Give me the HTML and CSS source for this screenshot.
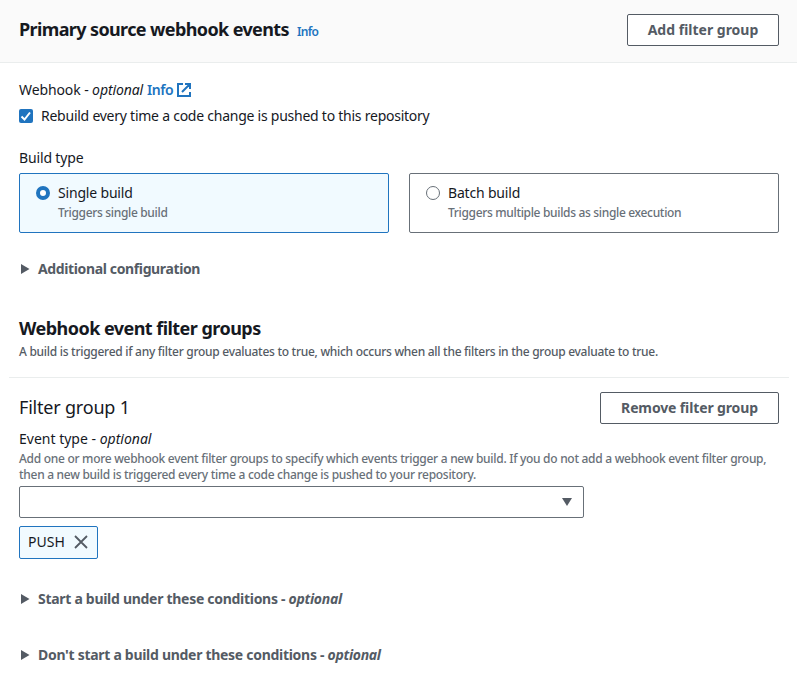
FILE: index.html
```html
<!DOCTYPE html>
<html lang="en">
<head>
<meta charset="utf-8">
<title>Primary source webhook events</title>
<link rel="stylesheet" href="styles.css">
</head>
<body>
<header class="panel-header">
  <h1>Primary source webhook events</h1>
  <a class="info-small">Info</a>
  <button class="btn add">Add filter group</button>
</header>
<main>
  <div class="row webhook"><span>Webhook - <i>optional</i></span><a>Info</a>
    <svg width="16" height="16" viewBox="0 0 16 16" fill="none" stroke="#2074bf" stroke-width="2"><path d="M14 10v4H2V2h5M9 2h5v5M6 10l8-8"/></svg>
  </div>
  <label class="row rebuild"><svg width="14" height="14" viewBox="0 0 14 14"><rect width="14" height="14" rx="2" fill="#2074bf"/><path d="M2.5 7.5l3 3 5.5-7" fill="none" stroke="#fff" stroke-width="2"/></svg><span>Rebuild every time a code change is pushed to this repository</span></label>
  <div class="build-label">Build type</div>
  <div class="tiles">
    <label class="tile selected"><span class="radio"></span><span><b>Single build</b><small>Triggers single build</small></span></label>
    <label class="tile"><span class="radio"></span><span><b>Batch build</b><small>Triggers multiple builds as single execution</small></span></label>
  </div>
  <div class="expander first"><svg width="9" height="10" viewBox="0 0 9 10"><path d="M0 0l8.5 5L0 10z"/></svg><span>Additional configuration</span></div>
  <h2>Webhook event filter groups</h2>
  <p class="desc">A build is triggered if any filter group evaluates to true, which occurs when all the filters in the group evaluate to true.</p>
  <hr>
  <div class="group-head"><h3>Filter group 1</h3><button class="btn remove">Remove filter group</button></div>
  <div class="event-label">Event type - <i>optional</i></div>
  <p class="desc help">Add one or more webhook event filter groups to specify which events trigger a new build. If you do not add a webhook event filter group,<br>then a new build is triggered every time a code change is pushed to your repository.</p>
  <div class="select"><svg width="10" height="8" viewBox="0 0 10 8"><path d="M0 0h10L5 8z"/></svg></div>
  <div class="token"><span>PUSH</span><svg width="14" height="14" viewBox="0 0 14 14"><path d="M1 1l12 12M13 1L1 13" stroke="#545b64" stroke-width="1.8"/></svg></div>
  <div class="expander start"><svg width="9" height="10" viewBox="0 0 9 10"><path d="M0 0l8.5 5L0 10z"/></svg><span>Start a build under these conditions - <i>optional</i></span></div>
  <div class="expander dont"><svg width="9" height="10" viewBox="0 0 9 10"><path d="M0 0l8.5 5L0 10z"/></svg><span>Don't start a build under these conditions - <i>optional</i></span></div>
</main>
</body>
</html>
```
FILE: styles.css
```css
*{box-sizing:border-box}
body{margin:0;background:#fff;color:#16191f;font:14px/22px "Noto Sans",sans-serif;white-space:nowrap}
h1,h2,h3,p{margin:0}
svg{display:block;flex:none}
a{color:#2074bf}
.panel-header{height:63px;background:#fafafa;border-bottom:1px solid #eaeded;display:flex;align-items:center;padding:0 18px 4px 19px}
h1,h2{font-size:18px;line-height:22px;font-weight:700}
h1{letter-spacing:-.62px}
.info-small{font-size:12px;font-weight:600;margin:6px 0 0 8px;letter-spacing:-.6px}
.btn{height:32px;border:1px solid #545b64;border-radius:2px;background:#fff;color:#545b64;font:700 14px/22px "Noto Sans",sans-serif;margin-left:auto;padding:0}
.add{width:152px;margin-top:2px}
.remove{width:179px;letter-spacing:-.13px}
main{padding:16px 18px 0 19px}
.row{display:flex;align-items:center;height:22px}
.webhook{gap:4px;letter-spacing:-.1px}
.webhook a{font-weight:600;letter-spacing:-.5px}
.webhook svg{margin-left:-1px}
.rebuild{margin-top:4px;gap:8px;letter-spacing:-.245px}
.build-label{margin-top:20px;letter-spacing:-.15px}
.tiles{display:grid;grid-template-columns:1fr 1fr;gap:20px;margin-top:4px}
.tile{height:60px;border:1px solid #687078;border-radius:2px;display:flex;gap:8px;padding:8px 16px}
.selected{border-color:#2074bf;background:#f1faff}
.radio{width:14px;height:14px;border:1px solid #687078;border-radius:50%;background:#fff;margin-top:4px}
.selected .radio{border:4px solid #2074bf}
.tile b{display:block;font-weight:400;letter-spacing:-.18px}
.tile small{display:block;font-size:12px;line-height:16px;color:#687078;font-weight:500;letter-spacing:-.33px;margin-top:1px}
.expander{display:flex;align-items:center;gap:8px;padding-left:2px;color:#545b64;font-weight:700;fill:#545b64;letter-spacing:-.29px}
.first{margin-top:25px;letter-spacing:-.37px}
h2{margin-top:37px;letter-spacing:-.54px}
.desc{font-size:12px;line-height:16px;color:#545b64;font-weight:500;letter-spacing:-.28px;margin-top:5px}
hr{border:0;border-top:1px solid #eaeded;margin:17px -10px 14px -10px}
.group-head{display:flex;align-items:center}
h3{font-size:18px;font-weight:400;letter-spacing:-.2px;padding-bottom:2px}
.event-label{margin-top:4px}
.help{color:#687078;margin:1px 0 3px;letter-spacing:-.29px}
.select{width:565px;height:32px;border:1px solid #687078;border-radius:2px;display:flex;align-items:center;justify-content:flex-end;padding-right:11px;fill:#545b64}
.token{width:79px;height:33px;margin-top:8px;background:#f1faff;border:1px solid #2074bf;border-radius:2px;display:flex;align-items:center;padding:0 0 2px 8px;gap:9px}
.start{margin-top:29px}.dont{margin-top:34px}
```
